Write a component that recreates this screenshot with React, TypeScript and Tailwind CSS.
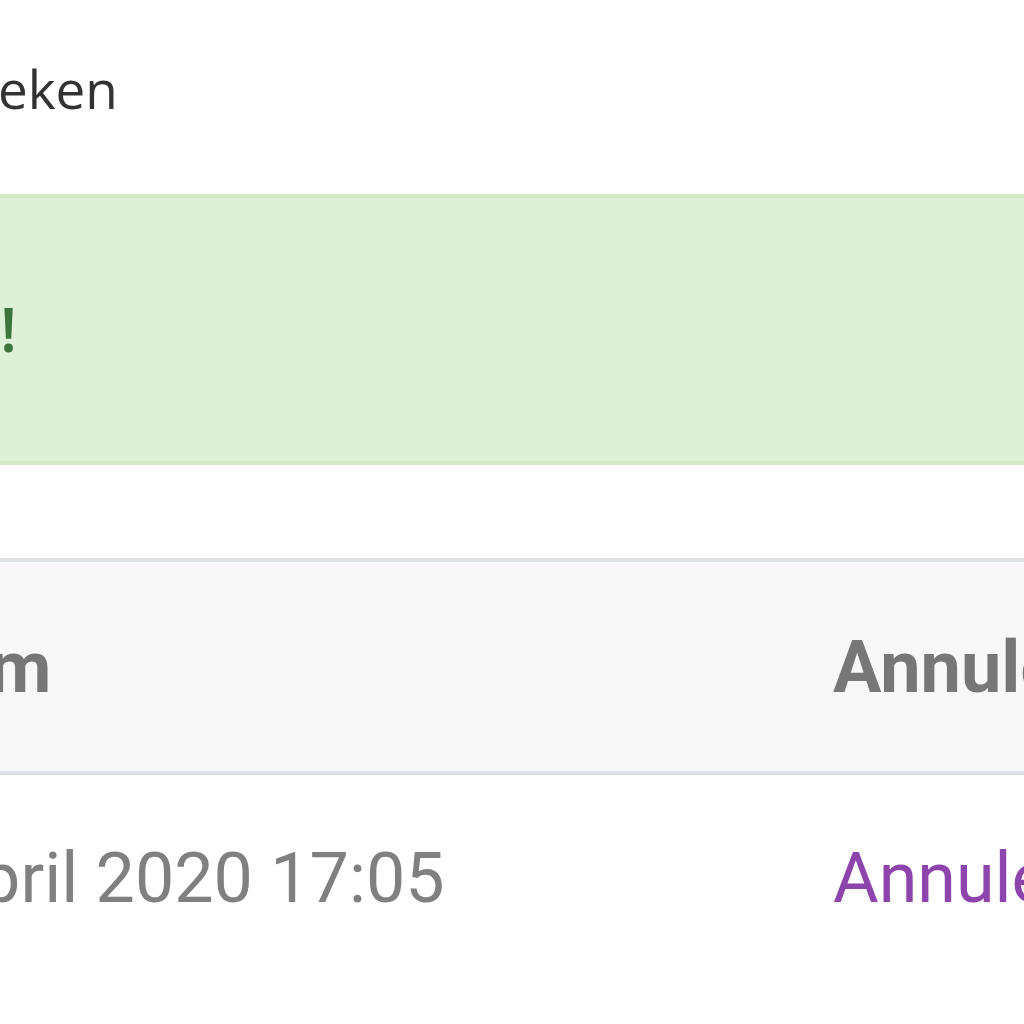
import React from "react";

export default function App() {
  return (
    <div className="w-[1024px] h-[1024px] overflow-hidden bg-white">
      <div className="-ml-[150px] w-[1400px]">
        <div
          className="mt-[62px] ml-[148px] text-[53px] leading-none text-[#333333]"
          style={{ fontFamily: '"Open Sans", sans-serif' }}
        >
          eken
        </div>

        <div className="mt-[79px] h-[271px] border-4 border-[#d6e9c6] bg-[#dff0d8] flex items-center">
          <span
            className="ml-[146px] -mt-[4px] text-[62px] leading-none font-semibold text-[#3c763d]"
            style={{ fontFamily: '"Open Sans", sans-serif' }}
          >
            !
          </span>
        </div>

        <div
          className="mt-[93px]"
          style={{ fontFamily: "Roboto, sans-serif" }}
        >
          <div className="grid grid-cols-[983px_1fr] h-[217px] border-y-4 border-[#dee2e6] bg-[#f8f8f8] items-center">
            <div className="-ml-[11px] text-[72px] leading-none font-bold text-[#777777] pt-[2px]">Datum</div>
            <div className="text-[72px] leading-none font-bold text-[#777777] pt-[2px]">Annuleren</div>
          </div>
          <div className="grid grid-cols-[983px_1fr] h-[206px] items-center">
            <div className="-ml-[3px] text-[70px] leading-none text-[#808080]">17 april 2020 17:05</div>
            <div className="text-[70px] leading-none text-[#8e44ad]">Annuleren</div>
          </div>
        </div>
      </div>
    </div>
  );
}
